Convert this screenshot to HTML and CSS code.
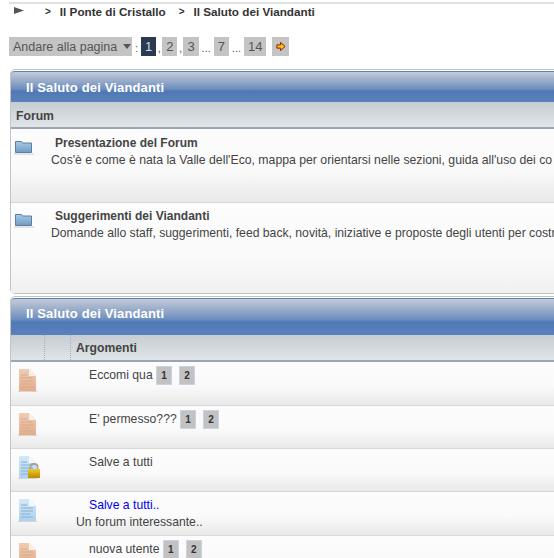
FILE: index.html
```html
<!DOCTYPE html>
<html lang="en">
<head>
    <meta charset="UTF-8">
    <title>Il Saluto dei Viandanti</title>
    <link rel="stylesheet" href="styles.css">
</head>
<body>
    <svg class="defs" width="0" height="0">
        <defs>
            <linearGradient id="redPage" x1="0" y1="0" x2="0" y2="1">
                <stop offset="0" stop-color="#f0cdb4"/>
                <stop offset="1" stop-color="#e2ad8c"/>
            </linearGradient>
            <linearGradient id="bluePage" x1="0" y1="0" x2="0" y2="1">
                <stop offset="0" stop-color="#d6e8f8"/>
                <stop offset="1" stop-color="#aed1f0"/>
            </linearGradient>
            <linearGradient id="folderFill" x1="0" y1="0" x2="0" y2="1">
                <stop offset="0" stop-color="#a9cbe6"/>
                <stop offset="1" stop-color="#6c9cc4"/>
            </linearGradient>
            <linearGradient id="lockFill" x1="0" y1="0" x2="0" y2="1">
                <stop offset="0" stop-color="#f0c92a"/>
                <stop offset="1" stop-color="#b98a00"/>
            </linearGradient>
            <symbol id="folder" viewBox="0 0 20 16">
                <path d="M1.5 2.5 h6 l1 1.5 h9 v9.5 h-16z" fill="url(#folderFill)" stroke="#5d7f9c" stroke-width="1"/>
                <rect x="0" y="14.5" width="20" height="1.2" fill="#d4d4d4"/>
            </symbol>
            <symbol id="pageRed" viewBox="0 0 20 24">
                <path d="M1 1 h10 l7 7 v15 h-17z" fill="url(#redPage)"/>
                <path d="M11 1 l7 7 h-7z" fill="#f8efe8"/>
                <path d="M3 7 h6 M3 10 h12 M3 13 h12 M3 16 h9 M3 19 h12" stroke="#d8a98c" stroke-width="1"/>
                <rect x="0" y="23" width="19" height="1" fill="#d8d4d0"/>
            </symbol>
            <symbol id="pageBlue" viewBox="0 0 20 24">
                <path d="M1 1 h10 l7 7 v15 h-17z" fill="url(#bluePage)"/>
                <path d="M11 1 l7 7 h-7z" fill="#f2f8fd"/>
                <path d="M3 7 h6 M3 10 h12 M3 13 h12 M3 16 h9 M3 19 h12" stroke="#86aed0" stroke-width="1"/>
                <rect x="0" y="23" width="19" height="1" fill="#d4d6d8"/>
            </symbol>
        </defs>
    </svg>

    <div class="topline"></div>

    <div class="breadcrumb">
        <svg class="crumb-home" width="10" height="7" viewBox="0 0 10 7"><path d="M0 0 L10 3.500 L0 7z" fill="#555"/></svg>
        <span class="crumb-sep">&gt;</span>
        <a class="crumb-link">Il Ponte di Cristallo</a>
        <span class="crumb-sep">&gt;</span>
        <a class="crumb-link">Il Saluto dei Viandanti</a>
    </div>

    <div class="pager">
        <span class="pager-jump">Andare alla pagina <i class="caret"></i></span>
        <span class="pager-text pager-colon">:</span>
        <span class="pager-num current">1</span><span class="pager-text">,</span>
        <span class="pager-num">2</span><span class="pager-text">,</span>
        <span class="pager-num">3</span><span class="pager-text pager-dots">...</span>
        <span class="pager-num">7</span><span class="pager-text pager-dots">...</span>
        <span class="pager-num">14</span>
        <span class="pager-next">
            <svg width="10" height="9" viewBox="0 0 12 11"><path d="M1 3.500 h4.500 v-3 l5.500 5 l-5.500 5 v-3 h-4.500z" fill="#f5c518" stroke="#8a1c00" stroke-width="1.200"/></svg>
        </span>
    </div>

    <div class="panel panel-forums">
        <h2 class="panel-title">Il Saluto dei Viandanti</h2>
        <div class="col-head head-forums"><span class="col-forum">Forum</span></div>
        <div class="forum-row row-first">
            <svg class="folder-icon"><use href="#folder"/></svg>
            <div class="forum-body">
                <div class="forum-name">Presentazione del Forum</div>
                <div class="forum-desc">Cos'è e come è nata la Valle dell'Eco, mappa per orientarsi nelle sezioni, guida all'uso dei co</div>
            </div>
        </div>
        <div class="forum-row row-last">
            <svg class="folder-icon"><use href="#folder"/></svg>
            <div class="forum-body">
                <div class="forum-name">Suggerimenti dei Viandanti</div>
                <div class="forum-desc">Domande allo staff, suggerimenti, feed back, novità, iniziative e proposte degli utenti per costr</div>
            </div>
        </div>
    </div>

    <div class="panel panel-topics">
        <h2 class="panel-title">Il Saluto dei Viandanti</h2>
        <div class="col-head head-topics">
            <span class="col-blank"></span>
            <span class="col-blank col-blank-small"></span>
            <span class="col-topics">Argomenti</span>
        </div>
        <div class="topic-row topic-tall">
            <svg class="page-icon"><use href="#pageRed"/></svg>
            <div class="topic-body">
                <div class="topic-line">Eccomi qua <span class="mini-num">1</span><span class="mini-num">2</span></div>
            </div>
        </div>
        <div class="topic-row">
            <svg class="page-icon"><use href="#pageRed"/></svg>
            <div class="topic-body">
                <div class="topic-line">E' permesso??? <span class="mini-num">1</span><span class="mini-num">2</span></div>
            </div>
        </div>
        <div class="topic-row">
            <div class="icon-wrap">
                <svg class="page-icon"><use href="#pageBlue"/></svg>
                <svg class="lock-icon" width="12" height="15" viewBox="0 0 12 15">
                    <path d="M2.500 7 V3.500 a2.500 2.500 0 0 1 2.500 -2.500 h2 a2.500 2.500 0 0 1 2.500 2.500 V7" fill="none" stroke="#a0a0a0" stroke-width="1.800"/>
                    <rect x="0" y="6" width="12" height="9" fill="url(#lockFill)"/>
                </svg>
            </div>
            <div class="topic-body">
                <div class="topic-line">Salve a tutti</div>
            </div>
        </div>
        <div class="topic-row topic-tall">
            <svg class="page-icon"><use href="#pageBlue"/></svg>
            <div class="topic-body">
                <div class="topic-line"><a class="topic-new">Salve a tutti..</a></div>
                <div class="topic-sub">Un forum interessante..</div>
            </div>
        </div>
        <div class="topic-row">
            <svg class="page-icon"><use href="#pageRed"/></svg>
            <div class="topic-body">
                <div class="topic-line">nuova utente <span class="mini-num">1</span><span class="mini-num">2</span></div>
            </div>
        </div>
    </div>
</body>
</html>
```

FILE: styles.css
```css
:root {
    --title-gradient: linear-gradient(180deg, #c3cbd6 0%, #9fb0cb 25%, #6f90c0 55%, #4f79b6 65%, #5b80bb 100%);
    --head-gradient: linear-gradient(180deg, #c6ccd2 0%, #e1e5e8 100%);
    --row-gradient: linear-gradient(180deg, #fcfcfc 0%, #fafafa 55%, #e9e9e9 100%);
}

html, body {
    height: 558px;
    overflow: hidden;
}

body {
    margin: 0;
    background: #ffffff;
    color: #444444;
    font-family: 'Liberation Sans', Arial, sans-serif;
    font-size: 12.2px;
}

.defs {
    position: absolute;
}

.topline {
    height: 2px;
    margin: 2px 0 0 9px;
    background: #e2e2e2;
}

.breadcrumb {
    display: flex;
    align-items: center;
    height: 14px;
    padding-left: 14px;
    font-weight: bold;
    font-size: 11.7px;
    color: #333333;
}

.crumb-home {
    flex: none;
    margin: -2px 21px 0 0;
}

.crumb-sep {
    margin-right: 9px;
    font-size: 10px;
}

.crumb-link {
    margin-right: 13px;
}

.pager {
    display: flex;
    align-items: center;
    height: 19px;
    margin-top: 19px;
    padding-left: 9px;
    font-size: 13px;
    color: #555555;
    white-space: nowrap;
}

.pager-jump {
    display: flex;
    align-items: center;
    height: 19px;
    width: 123px;
    padding-left: 4px;
    box-sizing: border-box;
    background: #c4c4c4;
    font-size: 12.5px;
}

.caret {
    width: 0;
    height: 0;
    margin-left: 6px;
    border-left: 4px solid transparent;
    border-right: 4px solid transparent;
    border-top: 5px solid #555555;
}

.pager-text {
    width: 6px;
    padding-top: 3px;
    text-align: center;
    font-size: 11px;
}

.pager-colon {
    width: 9px;
}

.pager-dots {
    width: 15px;
}

.pager-num {
    height: 19px;
    padding: 0 4px;
    line-height: 19px;
    background: #c4c4c4;
}

.pager-num.current {
    background: #2a3a50;
    color: #d8dde4;
}

.pager-next {
    display: flex;
    align-items: center;
    justify-content: center;
    width: 17px;
    height: 19px;
    margin-left: 6px;
    background: #c4c4c4;
}

.panel {
    width: 900px;
    margin-left: 10px;
    border: 1px solid #c4c4c4;
    border-radius: 5px 0 0 5px;
    box-sizing: border-box;
    background: #ffffff;
}

.panel-forums {
    height: 225px;
    margin-top: 13px;
}

.panel-topics {
    height: 300px;
    margin-top: 2px;
}

.panel-title {
    box-sizing: border-box;
    margin: 1px 0 0;
    padding-left: 15px;
    border-top: 1px solid #5a7fc4;
    border-radius: 4px 0 0 0;
    background: var(--title-gradient);
    color: #ffffff;
    font-size: 13px;
    font-weight: bold;
    letter-spacing: 0.15px;
}

.panel-forums .panel-title {
    height: 31px;
    line-height: 31px;
}

.panel-topics .panel-title {
    height: 37px;
    line-height: 29px;
}

.col-head {
    display: flex;
    align-items: center;
    height: 27px;
    box-sizing: border-box;
    background: var(--head-gradient);
    border-bottom: 2px solid #9aa6b8;
    font-weight: bold;
    color: #444444;
}

.head-forums {
    padding-top: 2px;
}

.col-forum {
    padding-left: 5px;
}

.col-blank {
    align-self: stretch;
    width: 33px;
    border-right: 1px dotted #a8b0ba;
}

.col-blank-small {
    width: 25px;
}

.col-topics {
    padding-left: 5px;
}

.forum-row {
    display: flex;
    box-sizing: border-box;
    background: var(--row-gradient);
    border-bottom: 1px solid #d8d8d8;
}

.row-first {
    height: 74px;
}

.row-first .forum-desc {
    font-size: 12.25px;
}

.row-last {
    height: 90px;
    border-bottom: 0;
    background: linear-gradient(180deg, #fcfcfc 0%, #fafafa 60%, #f0f0f0 100%);
}

.folder-icon {
    flex: none;
    width: 20px;
    height: 16px;
    margin: 10px 0 0 3px;
}

.row-last .folder-icon {
    margin-top: 9px;
}

.forum-body {
    margin-left: 17px;
    padding-top: 7px;
    white-space: nowrap;
}

.row-last .forum-body {
    padding-top: 6px;
}

.forum-name {
    margin-left: 4px;
    font-size: 12px;
    font-weight: bold;
    line-height: 14px;
}

.forum-desc {
    line-height: 20px;
}

.topic-row {
    display: flex;
    height: 43px;
    box-sizing: border-box;
    background: var(--row-gradient);
    border-bottom: 1px solid #d8d8d8;
}

.topic-tall {
    height: 44px;
}

.page-icon {
    flex: none;
    width: 20px;
    height: 24px;
    margin: 6px 0 0 7px;
}

.icon-wrap {
    position: relative;
    flex: none;
    width: 27px;
    height: 30px;
}

.lock-icon {
    position: absolute;
    left: 17px;
    top: 14px;
}

.topic-body {
    margin-left: 51px;
    padding-top: 4px;
    white-space: nowrap;
}

.topic-line {
    display: flex;
    align-items: flex-start;
    line-height: 19px;
    white-space: pre;
}

.mini-num {
    width: 16px;
    height: 19px;
    margin-right: 7px;
    box-sizing: border-box;
    border: 1px solid #c8d4e2;
    background: #c2c2c2;
    text-align: center;
    font-size: 10px;
    font-weight: bold;
    line-height: 17px;
    color: #333333;
}

.topic-new {
    color: #0000f0;
}

.topic-sub {
    margin: -1px 0 0 -13px;
    line-height: 16px;
}
```
